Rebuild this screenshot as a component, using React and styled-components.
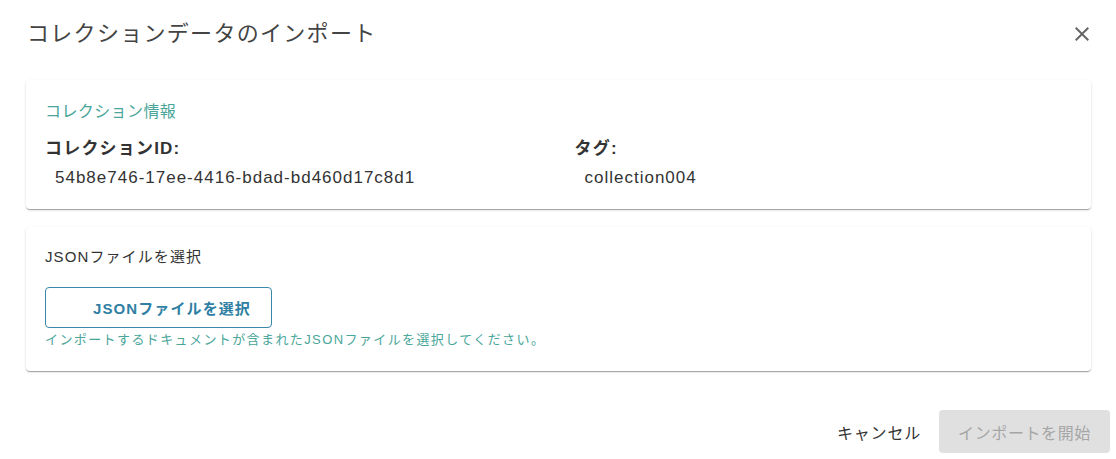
import React from 'react';
import styled, { createGlobalStyle } from 'styled-components';

const GlobalStyle = createGlobalStyle`
    body{
        margin:0;
        background:#fff;
        font-family: "Liberation Sans", "Noto Sans CJK JP", sans-serif;
    }
`;

const FONT = '"Liberation Sans", "Noto Sans CJK JP", sans-serif';

const collection = {
    id:'54b8e746-17ee-4416-bdad-bd460d17c8d1',
    tag:'collection004'
};

const App = ()=>{
    return(
    <>
        <GlobalStyle/>
        <Dialog>
            <Header>
                <Title>コレクションデータのインポート</Title>
                <CloseButton aria-label="close">
                    <svg width="24" height="24" viewBox="0 0 24 24">
                        <path fill="#666" d="M19 6.41 17.59 5 12 10.59 6.41 5 5 6.41 10.59 12 5 17.59 6.41 19 12 13.41 17.59 19 19 17.59 13.41 12z"/>
                    </svg>
                </CloseButton>
            </Header>
            <Content>
                <Card>
                    <SectionTitle>コレクション情報</SectionTitle>
                    <InfoGrid>
                        <InfoItem>
                            <InfoLabel>コレクションID:</InfoLabel>
                            <InfoValue>{collection.id}</InfoValue>
                        </InfoItem>
                        <InfoItem>
                            <InfoLabel>タグ:</InfoLabel>
                            <InfoValue>{collection.tag}</InfoValue>
                        </InfoItem>
                    </InfoGrid>
                </Card>
                <Card $pad="18px 19px 21px">
                    <FieldLabel>JSONファイルを選択</FieldLabel>
                    <OutlineButton>JSONファイルを選択</OutlineButton>
                    <HelperText>インポートするドキュメントが含まれたJSONファイルを選択してください。</HelperText>
                </Card>
            </Content>
            <Actions>
                <TextButton>キャンセル</TextButton>
                <PrimaryButton disabled>インポートを開始</PrimaryButton>
            </Actions>
        </Dialog>
    </>);
};

const Dialog=styled.div`
    width:1116px;
    height:459px;
    background:#fff;
    display:flex;
    flex-direction:column;
`;
const Header=styled.div`
    display:flex;
    align-items:center;
    justify-content:space-between;
    padding:17px 22px 0 27px;
    height:34px;
`;
const Title=styled.h2`
    margin:0;
    font-size:22px;
    line-height:34px;
    font-weight:400;
    color:#444;
    letter-spacing:1.3px;
`;
const CloseButton=styled.button`
    border:none;
    background:transparent;
    padding:0;
    width:24px;
    height:24px;
    display:flex;
    align-items:center;
    justify-content:center;
    cursor:pointer;
`;
const Content=styled.div`
    display:flex;
    flex-direction:column;
    gap:18px;
    padding:29px 25px 0 26px;
`;
const Card=styled.div`
    background:#fff;
    border-radius:4px;
    padding:${props=>props.$pad || '20px 19px 19px'};
    box-shadow:0 2px 1px -1px rgba(0,0,0,0.2),0 1px 1px 0 rgba(0,0,0,0.14),0 1px 3px 0 rgba(0,0,0,0.12);
`;
const SectionTitle=styled.div`
    font-size:16px;
    line-height:24px;
    color:#4aa69a;
    letter-spacing:0.4px;
`;
const InfoGrid=styled.div`
    display:grid;
    grid-template-columns:1fr 1fr;
    column-gap:32px;
    margin-top:13px;
`;
const InfoItem=styled.div`
    display:flex;
    flex-direction:column;
    gap:5px;
`;
const InfoLabel=styled.div`
    font-size:17px;
    line-height:24px;
    font-weight:700;
    color:#333;
    letter-spacing:1.2px;
`;
const InfoValue=styled.div`
    font-size:17px;
    line-height:24px;
    color:#333;
    padding-left:10px;
    letter-spacing:1px;
`;
const FieldLabel=styled.div`
    font-size:15px;
    line-height:24px;
    color:#333;
    letter-spacing:1.1px;
`;
const OutlineButton=styled.button`
    margin-top:18px;
    width:227px;
    height:41px;
    box-sizing:border-box;
    border:1px solid #3b88ad;
    border-radius:4px;
    background:#fff;
    color:#2f7fa4;
    font-family:${FONT};
    font-size:15px;
    font-weight:600;
    padding:0 0 0 27px;
    letter-spacing:1.1px;
    cursor:pointer;
`;
const HelperText=styled.div`
    margin-top:2px;
    font-size:13px;
    line-height:20px;
    color:#4aa69a;
    letter-spacing:1.4px;
`;
const Actions=styled.div`
    display:flex;
    justify-content:flex-end;
    align-items:center;
    gap:18px;
    padding:39px 6px 0 0;
`;
const TextButton=styled.button`
    border:none;
    background:transparent;
    font-family:${FONT};
    font-size:16px;
    color:#333;
    padding:0;
    letter-spacing:0.8px;
    cursor:pointer;
`;
const PrimaryButton=styled.button`
    width:171px;
    height:43px;
    border:none;
    border-radius:4px;
    background:#e0e0e0;
    color:#a6a6a6;
    font-family:${FONT};
    font-size:16px;
    letter-spacing:0.6px;
`;

export default App;
